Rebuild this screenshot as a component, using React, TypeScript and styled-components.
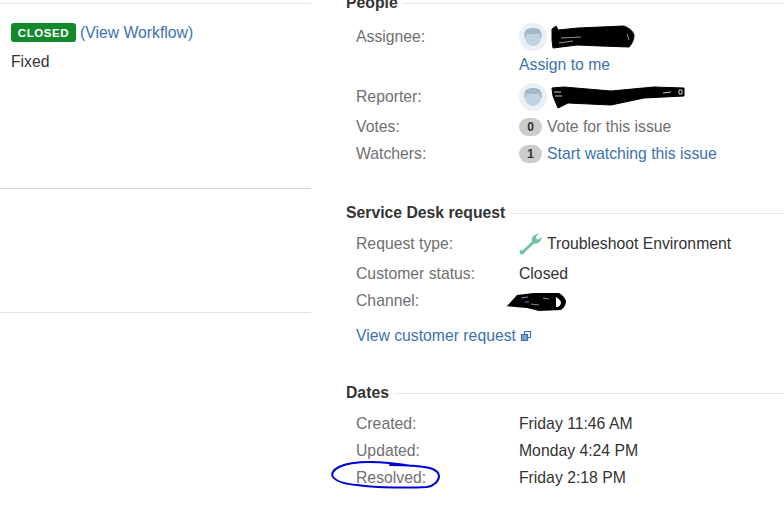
import React from 'react';
import styled, { createGlobalStyle } from 'styled-components';

const GlobalStyle = createGlobalStyle`
  html, body {
    margin: 0;
    padding: 0;
    background: #fff;
    overflow: hidden;
  }
  body {
    font-family: "Liberation Sans", Arial, sans-serif;
    font-size: 15.75px;
    color: #333;
  }
`;

const Page = styled.div`
  display: flex;
  width: 784px;
  height: 524px;
  overflow: hidden;
`;

const LeftColumn = styled.div`
  width: 311px;
  flex-shrink: 0;
  padding-top: 3px;
`;

const Rule = styled.div<{ $color: string; $top?: number }>`
  height: 1px;
  background: ${(p) => p.$color};
  margin-top: ${(p) => p.$top ?? 0}px;
`;

const StatusRow = styled.div`
  display: flex;
  align-items: center;
  gap: 4px;
  height: 19px;
  margin: 19px 0 0 11px;
`;

const Lozenge = styled.span`
  display: flex;
  align-items: center;
  justify-content: center;
  width: 65px;
  height: 19px;
  border-radius: 3px;
  background: #14892c;
  color: #fff;
  font-size: 11.5px;
  font-weight: 700;
  letter-spacing: 0.6px;
`;

const Link = styled.a`
  color: #3b73af;
  text-decoration: none;
`;

const Resolution = styled.div`
  margin: 11px 0 0 11px;
  line-height: 18px;
`;

const RightColumn = styled.div`
  flex: 1;
  padding-left: 35px;
  margin-top: -7px;
`;

const Section = styled.section<{ $top?: number }>`
  margin-top: ${(p) => p.$top ?? 0}px;
`;

const Heading = styled.h3<{ $below: number }>`
  display: flex;
  align-items: center;
  gap: 6px;
  height: 20px;
  margin: 0 0 ${(p) => p.$below}px;
  font-size: 15.75px;
  font-weight: 700;
  color: #333;
  &::after {
    content: '';
    flex: 1;
    height: 1px;
    background: #e5e5e5;
  }
`;

const Row = styled.div<{ $h: number }>`
  position: relative;
  display: flex;
  align-items: center;
  height: ${(p) => p.$h}px;
  padding-left: 10px;
`;

const Label = styled.div`
  width: 163px;
  flex-shrink: 0;
  color: #707070;
`;

const Value = styled.div`
  display: flex;
  align-items: center;
  white-space: nowrap;
`;

const Muted = styled.span`
  color: #707070;
`;

const Badge = styled.span`
  display: flex;
  align-items: center;
  justify-content: center;
  width: 23px;
  height: 18px;
  margin-right: 5px;
  border-radius: 9px;
  background: #ccc;
  color: #333;
  font-size: 12px;
  font-weight: 700;
`;

const AvatarIcon = styled.svg`
  width: 28px;
  height: 28px;
  flex-shrink: 0;
  margin-right: 4px;
`;

const WrenchIcon = styled.svg`
  width: 23px;
  height: 22px;
  margin-right: 5px;
`;

const Scribble = styled.svg`
  display: block;
  flex-shrink: 0;
  overflow: visible;
`;

const ChannelScribble = styled(Scribble)`
  margin-left: -12px;
`;

const ViewRequest = styled(Row)`
  margin-top: 11px;
`;

const ExternalIcon = styled.svg`
  width: 12px;
  height: 12px;
  margin-left: 4px;
`;

const Circled = styled.svg`
  position: absolute;
  left: -15px;
  top: -2px;
  overflow: visible;
  pointer-events: none;
`;

function Avatar() {
  return (
    <AvatarIcon viewBox="0 0 28 28">
      <circle cx="14" cy="14" r="14" fill="#e9f0f8" />
      <path d="M5.500 11c0-4 3.500-6 8.500-6s8.500 2 8.500 6v3c0 4-4 9-8.500 9s-8.500-5-8.500-9z" fill="#c1d2e0" />
      <path d="M5.500 11c0-4 3.500-6 8.500-6s8.500 2 8.500 6v3.500l-1.500-.500-.5-3.500c-3.500.8-9.500.8-13 0l-.5 3.500-1.500.500z" fill="#a6b9c9" />
    </AvatarIcon>
  );
}

export default function App() {
  return (
    <Page>
      <GlobalStyle />
      <LeftColumn>
        <Rule $color="#e5e5e5" />
        <StatusRow>
          <Lozenge>CLOSED</Lozenge>
          <Link>(View Workflow)</Link>
        </StatusRow>
        <Resolution>Fixed</Resolution>
        <Rule $color="#cfcfcf" $top={117} />
        <Rule $color="#e2e2e2" $top={123} />
      </LeftColumn>
      <RightColumn>
        <Section>
          <Heading $below={10}>People</Heading>
          <Row $h={28}>
            <Label>Assignee:</Label>
            <Value>
              <Avatar />
              <Scribble width="84" height="24" viewBox="0 0 84 24">
                <path d="M1 4L5 1l2 4 20-2 46-2c5 2 9 5 10 9 0 5-2 9-5 12l-28-1-24-1-24 3-1-8z" fill="#000" stroke="#000" strokeWidth="1" strokeLinejoin="round" />
                <path d="M10 13l20-1M8 18l14-2M76 9l2 6" stroke="#fff" strokeWidth="0.6" fill="none" />
              </Scribble>
            </Value>
          </Row>
          <Row $h={28}>
            <Label />
            <Link>Assign to me</Link>
          </Row>
          <Row $h={36}>
            <Label>Reporter:</Label>
            <Value>
              <Avatar />
              <Scribble width="134" height="24" viewBox="0 0 134 24">
                <path d="M1 3l12-1 47 4 43-4 30 1v8l-40 2-33 7-43-2-10 5-5-12z" fill="#000" stroke="#000" strokeWidth="1" strokeLinejoin="round" />
                <path d="M3 7h7M4 11h7M128 5h3v4h-3zM112 8l8-1" stroke="#fff" strokeWidth="0.8" fill="none" />
              </Scribble>
            </Value>
          </Row>
          <Row $h={24}>
            <Label>Votes:</Label>
            <Value>
              <Badge>0</Badge>
              <Muted>Vote for this issue</Muted>
            </Value>
          </Row>
          <Row $h={30}>
            <Label>Watchers:</Label>
            <Value>
              <Badge>1</Badge>
              <Link>Start watching this issue</Link>
            </Value>
          </Row>
        </Section>
        <Section $top={34}>
          <Heading $below={6}>Service Desk request</Heading>
          <Row $h={30}>
            <Label>Request type:</Label>
            <Value>
              <WrenchIcon viewBox="0 0 23 22">
                <path d="M1.500 21.500L0.500 17 3.500 17.500 13 8.500C12 5 14.500 1 20 0.500L16.800 3.800 17.500 6 20 6.500 22.500 3.500C23 8 19 11.500 15 10.500L5.500 19.500 5 21z" fill="#6fc3a0" />
              </WrenchIcon>
              Troubleshoot Environment
            </Value>
          </Row>
          <Row $h={30}>
            <Label>Customer status:</Label>
            <Value>Closed</Value>
          </Row>
          <Row $h={24}>
            <Label>Channel:</Label>
            <Value>
              <ChannelScribble width="60" height="20" viewBox="0 0 60 20">
                <path d="M0 15L10 4l16-2 26 0c4 2 6 5 7 8 0 3-1 6-5 9l-22 1-12-3-12-1-10-1z" fill="#000" />
                <path d="M49 6c2 1 4 3 5 5 0 2-1 4-3 5l-2 0z" fill="#fff" />
                <path d="M14 7l7-1M24 13l8 1M36 7l6 1M18 11l4 0" stroke="#9bb8d8" strokeWidth="0.8" fill="none" />
              </ChannelScribble>
            </Value>
          </Row>
          <ViewRequest $h={24}>
            <Link>View customer request</Link>
            <ExternalIcon viewBox="0 0 12 12">
              <path d="M4.500 1.500h6v6h-6z" fill="none" stroke="#3b73af" strokeWidth="1.200" />
              <path d="M1.500 4.500h6v6h-6z" fill="#7fa3ca" stroke="#3b73af" strokeWidth="1.200" />
            </ExternalIcon>
          </ViewRequest>
        </Section>
        <Section $top={35}>
          <Heading $below={7}>Dates</Heading>
          <Row $h={27}>
            <Label>Created:</Label>
            <Value>Friday 11:46 AM</Value>
          </Row>
          <Row $h={27}>
            <Label>Updated:</Label>
            <Value>Monday 4:24 PM</Value>
          </Row>
          <Row $h={27}>
            <Label>Resolved:</Label>
            <Value>Friday 2:18 PM</Value>
            <Circled width="110" height="30" viewBox="0 0 110 30">
              <path
                d="M81 4C62 1 54 0 39 0 26 0 14 2 8 5 2 8 0 12 2 15c3 4 12 7 24 8 22 3 54 3 70 2 7-1 12-6 12-11 0-4-3-6-9-8-9-2-25-3-40-3"
                fill="none"
                stroke="#0000d4"
                strokeWidth="2"
                strokeLinecap="round"
              />
            </Circled>
          </Row>
        </Section>
      </RightColumn>
    </Page>
  );
}
